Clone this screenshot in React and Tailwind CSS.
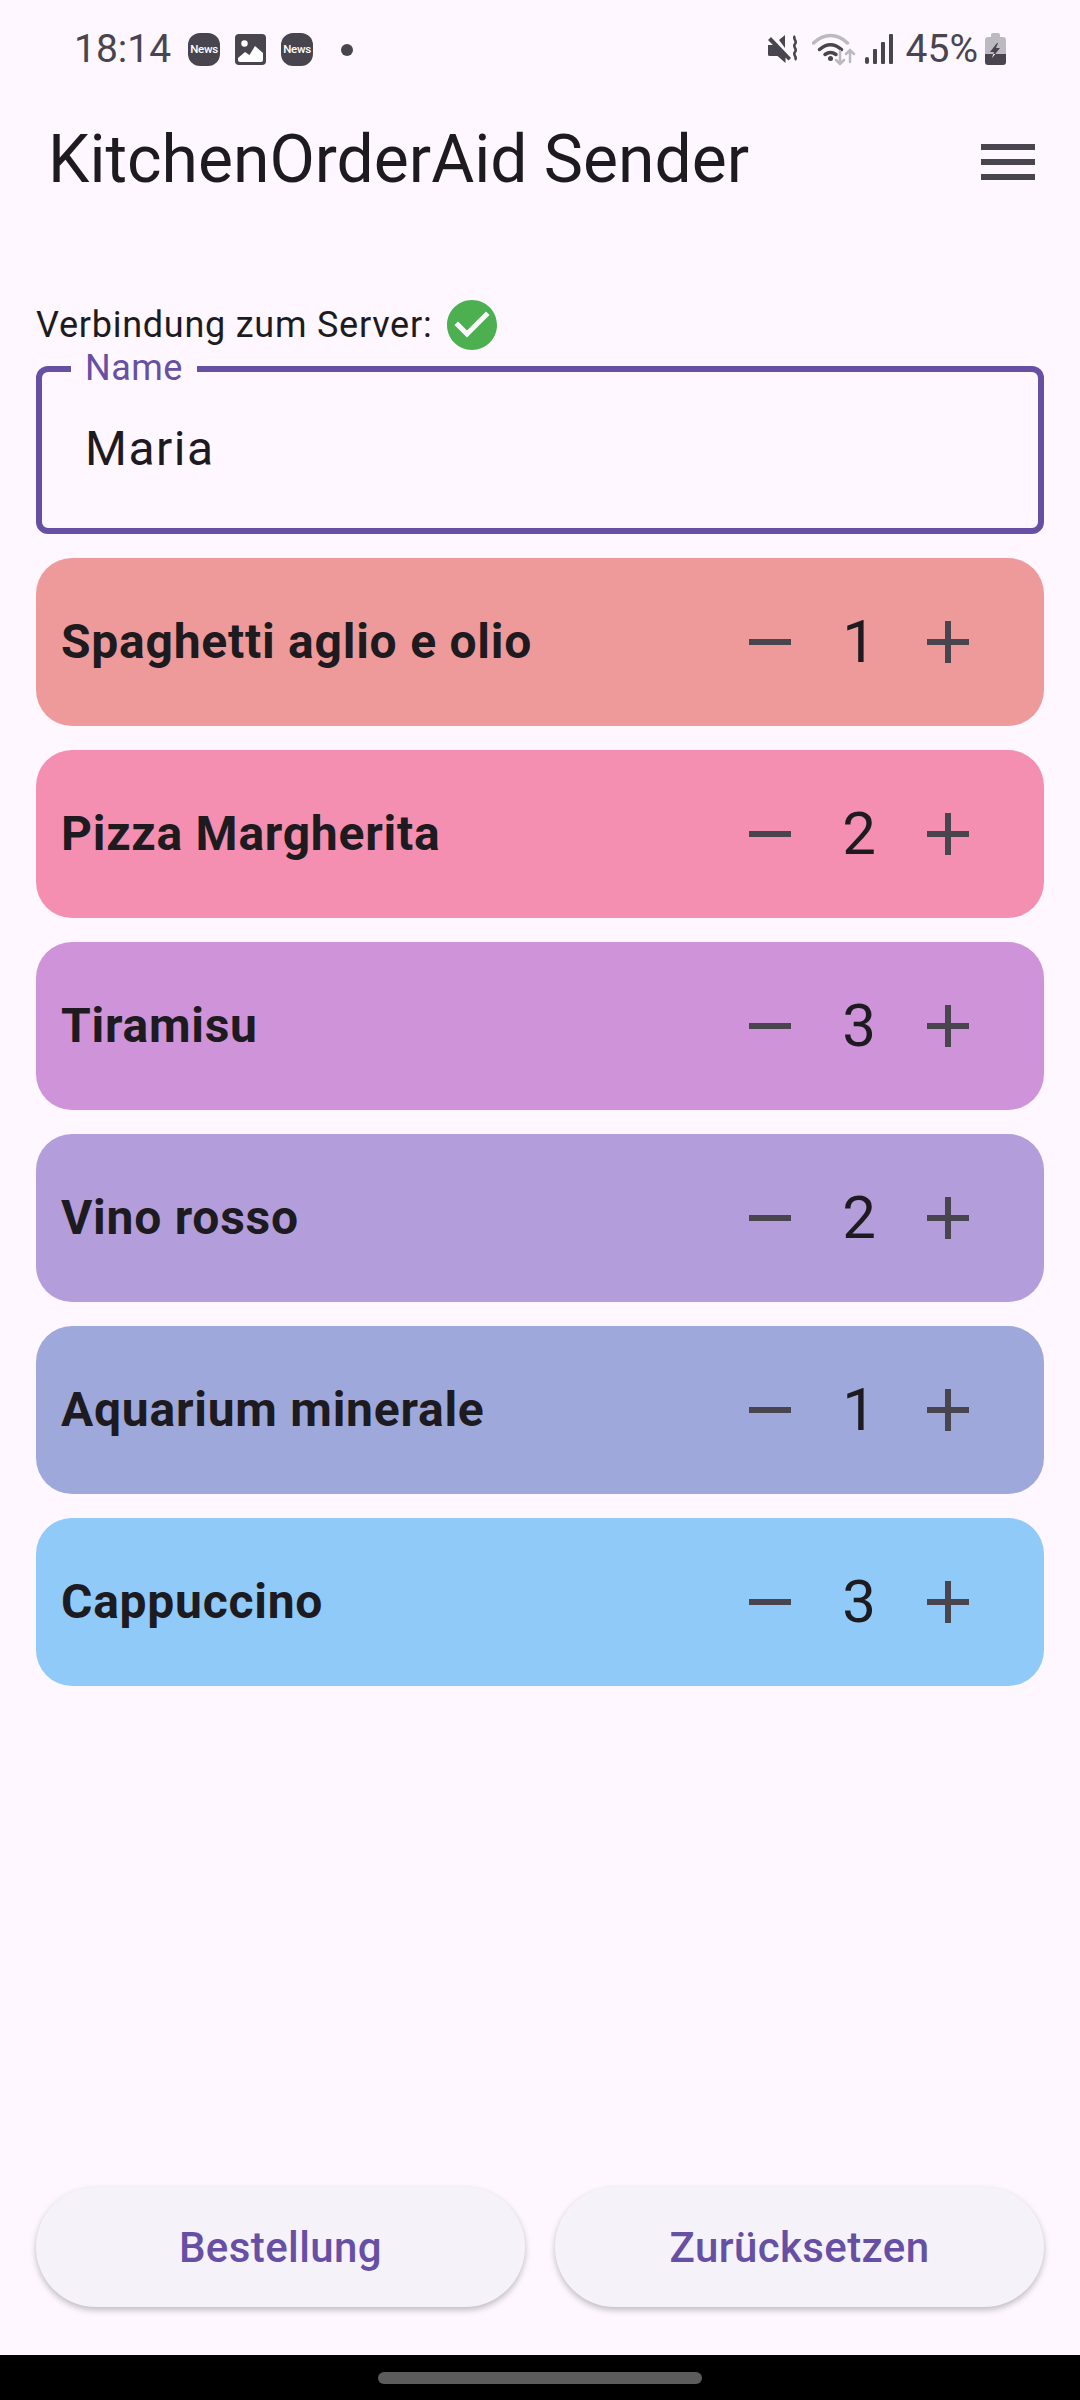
const items = [
  { name: 'Spaghetti aglio e olio', qty: 1, bg: 'bg-[#ef9a9a]' },
  { name: 'Pizza Margherita', qty: 2, bg: 'bg-[#f48fb1]' },
  { name: 'Tiramisu', qty: 3, bg: 'bg-[#ce93d8]' },
  { name: 'Vino rosso', qty: 2, bg: 'bg-[#b39ddb]' },
  { name: 'Aquarium minerale', qty: 1, bg: 'bg-[#9fa8da]' },
  { name: 'Cappuccino', qty: 3, bg: 'bg-[#90caf9]' },
]

function NewsBadge() {
  return (
    <div className="flex h-[33px] w-[32px] items-center justify-center rounded-[12px] bg-[#49454f]">
      <span className="text-[11.5px] leading-none font-medium tracking-[-0.3px] text-white">News</span>
    </div>
  )
}

function ImageIcon() {
  return (
    <svg width="31" height="31" viewBox="0 0 31 31">
      <rect width="31" height="31" rx="4" fill="#49454f" />
      <circle cx="9.5" cy="9.5" r="3.2" fill="#fff" />
      <path d="M3 24l7-6 4.5 3L20 12l8 7v7a2 2 0 0 1-2 2H5a2 2 0 0 1-2-2z" fill="#fff" />
    </svg>
  )
}

function MuteIcon() {
  return (
    <svg width="31" height="31" viewBox="0 0 31 31" fill="#49454f">
      <path d="M0 11h5L0 6l3-3 20 21-2.5 2.5-3-3V29l-8-7H1.5A1.5 1.5 0 0 1 0 20.5z" />
      <path d="M11 6l6-5v13z" />
      <path d="M27 2c-3 3 3 5 0 8s3 5 0 8 3 5 0 8" fill="none" stroke="#49454f" strokeWidth="2.5" />
    </svg>
  )
}

function WifiIcon() {
  return (
    <svg width="44" height="34" viewBox="0 0 44 34" fill="none" strokeLinecap="round">
      <path d="M1.5 11C12 1 25 1 35.5 11" stroke="#bdb9c0" strokeWidth="3.5" />
      <path d="M7.5 17.5C15 11 22 11 29.5 17.5" stroke="#49454f" strokeWidth="3.5" />
      <path d="M13 22.5C17 19.5 20 19.5 24 22.5" stroke="#49454f" strokeWidth="3.5" />
      <circle cx="18.5" cy="26.5" r="2.5" fill="#49454f" />
      <path d="M28 19v13M24 28l4 4 4-4" stroke="#bdb9c0" strokeWidth="2.5" />
      <path d="M38 30V18M34 22l4-4 4 4" stroke="#bdb9c0" strokeWidth="2.5" />
    </svg>
  )
}

function SignalIcon() {
  return (
    <svg width="28" height="30" viewBox="0 0 28 30" fill="#49454f">
      <rect x="0" y="23" width="4" height="7" rx="2" />
      <rect x="8" y="15" width="4" height="15" rx="1" />
      <rect x="16" y="8" width="4" height="22" rx="1" />
      <rect x="24" y="0" width="4" height="30" rx="1" />
    </svg>
  )
}

function BatteryIcon() {
  return (
    <svg width="21" height="32" viewBox="0 0 21 32">
      <path d="M6 2a2 2 0 0 1 2-2h5a2 2 0 0 1 2 2v2h3a3 3 0 0 1 3 3v14H0V7a3 3 0 0 1 3-3h3z" fill="#bdb9c0" />
      <path d="M0 21h21v8a3 3 0 0 1-3 3H3a3 3 0 0 1-3-3z" fill="#49454f" />
      <path d="M12 10l-7 9h4l-.67 2h1.87L15 15h-4l2-5z" fill="#49454f" />
      <path d="M8.33 21L7 25l3.2-4z" fill="#fef7ff" />
    </svg>
  )
}

function StatusBar() {
  return (
    <div className="flex h-[66px] items-end justify-between pr-[74px] pl-[74px] text-[#49454f]">
      <div className="flex items-center">
        <span className="w-[114px] text-[39px] leading-[33px]">18:14</span>
        <div className="flex items-center gap-[15px]">
          <NewsBadge />
          <ImageIcon />
          <NewsBadge />
        </div>
        <div className="ml-[28px] h-3 w-3 rounded-full bg-[#49454f]" />
      </div>
      <div className="flex items-center">
        <MuteIcon />
        <div className="ml-[13px]"><WifiIcon /></div>
        <div className="ml-[9px]"><SignalIcon /></div>
        <span className="ml-[13px] text-[39px] leading-[33px]">45%</span>
        <div className="ml-[7px]"><BatteryIcon /></div>
      </div>
    </div>
  )
}

function MinusIcon() {
  return (
    <svg width="72" height="72" viewBox="0 0 24 24" fill="#49454f">
      <path d="M19 13H5v-2h14v2z" />
    </svg>
  )
}

function PlusIcon() {
  return (
    <svg width="72" height="72" viewBox="0 0 24 24" fill="#49454f">
      <path d="M19 13h-6v6h-2v-6H5v-2h6V5h2v6h6v2z" />
    </svg>
  )
}

function OrderRow({ item }) {
  return (
    <div className={`flex h-[168px] items-center justify-between rounded-[36px] pr-[60px] pl-[25px] ${item.bg}`}>
      <span className="text-[48px] font-bold tracking-[0.75px] text-[#1d1b20]">{item.name}</span>
      <div className="flex items-center">
        <MinusIcon />
        <span className="w-[106px] text-center text-[60px] leading-none text-[#1d1b20]">{item.qty}</span>
        <PlusIcon />
      </div>
    </div>
  )
}

export default function App() {
  return (
    <div className="flex h-[2400px] w-[1080px] flex-col overflow-hidden bg-[#fef7ff] font-['Roboto',sans-serif]">
      <StatusBar />
      <header className="mt-[59px] flex h-[70px] items-center justify-between pr-[45px] pl-[48px]">
        <h1 className="text-[66px] leading-none font-normal text-[#1d1b20]">KitchenOrderAid Sender</h1>
        <div className="mt-[4px] flex w-[54px] flex-col gap-[9px]">
          <div className="h-[6px] bg-[#49454f]" />
          <div className="h-[6px] bg-[#49454f]" />
          <div className="h-[6px] bg-[#49454f]" />
        </div>
      </header>
      <main className="flex flex-1 flex-col px-[36px]">
        <div className="mt-[100px] flex h-[60px] items-center">
          <span className="text-[36px] tracking-[0.75px] text-[#1d1b20]">Verbindung zum Server:</span>
          <svg className="ml-[10px]" width="60" height="60" viewBox="0 0 24 24" fill="#4caf50">
            <path d="M12 2C6.48 2 2 6.48 2 12s4.48 10 10 10 10-4.48 10-10S17.52 2 12 2zm-2 15l-5-5 1.41-1.41L10 14.17l7.59-7.59L19 8l-9 9z" />
          </svg>
        </div>
        <div className="relative mt-[11px] flex h-[168px] items-center rounded-[12px] border-[6px] border-[#6750a4] pb-[2px] pl-[43px]">
          <span className="absolute top-[-24px] left-[29px] bg-[#fef7ff] px-[14px] text-[36px] leading-[40px] tracking-[0.5px] text-[#6750a4]">Name</span>
          <span className="text-[48px] tracking-[1.5px] text-[#1d1b20]">Maria</span>
        </div>
        <div className="mt-[24px] flex flex-col gap-[24px]">
          {items.map(item => <OrderRow key={item.name} item={item} />)}
        </div>
        <div className="mt-auto mb-[48px] flex gap-[30px]">
          <button className="h-[120px] flex-1 rounded-full bg-[#f6f2f9] text-[42px] font-medium tracking-[0.4px] text-[#6750a4] shadow-[0_3px_6px_rgba(0,0,0,0.25)]">Bestellung</button>
          <button className="h-[120px] flex-1 rounded-full bg-[#f6f2f9] text-[42px] font-medium tracking-[0.4px] text-[#6750a4] shadow-[0_3px_6px_rgba(0,0,0,0.25)]">Zurücksetzen</button>
        </div>
      </main>
      <div className="flex h-[45px] items-start justify-center bg-black pt-[17px]">
        <div className="h-[12px] w-[324px] rounded-full bg-[#5c5c5c]" />
      </div>
    </div>
  )
}
